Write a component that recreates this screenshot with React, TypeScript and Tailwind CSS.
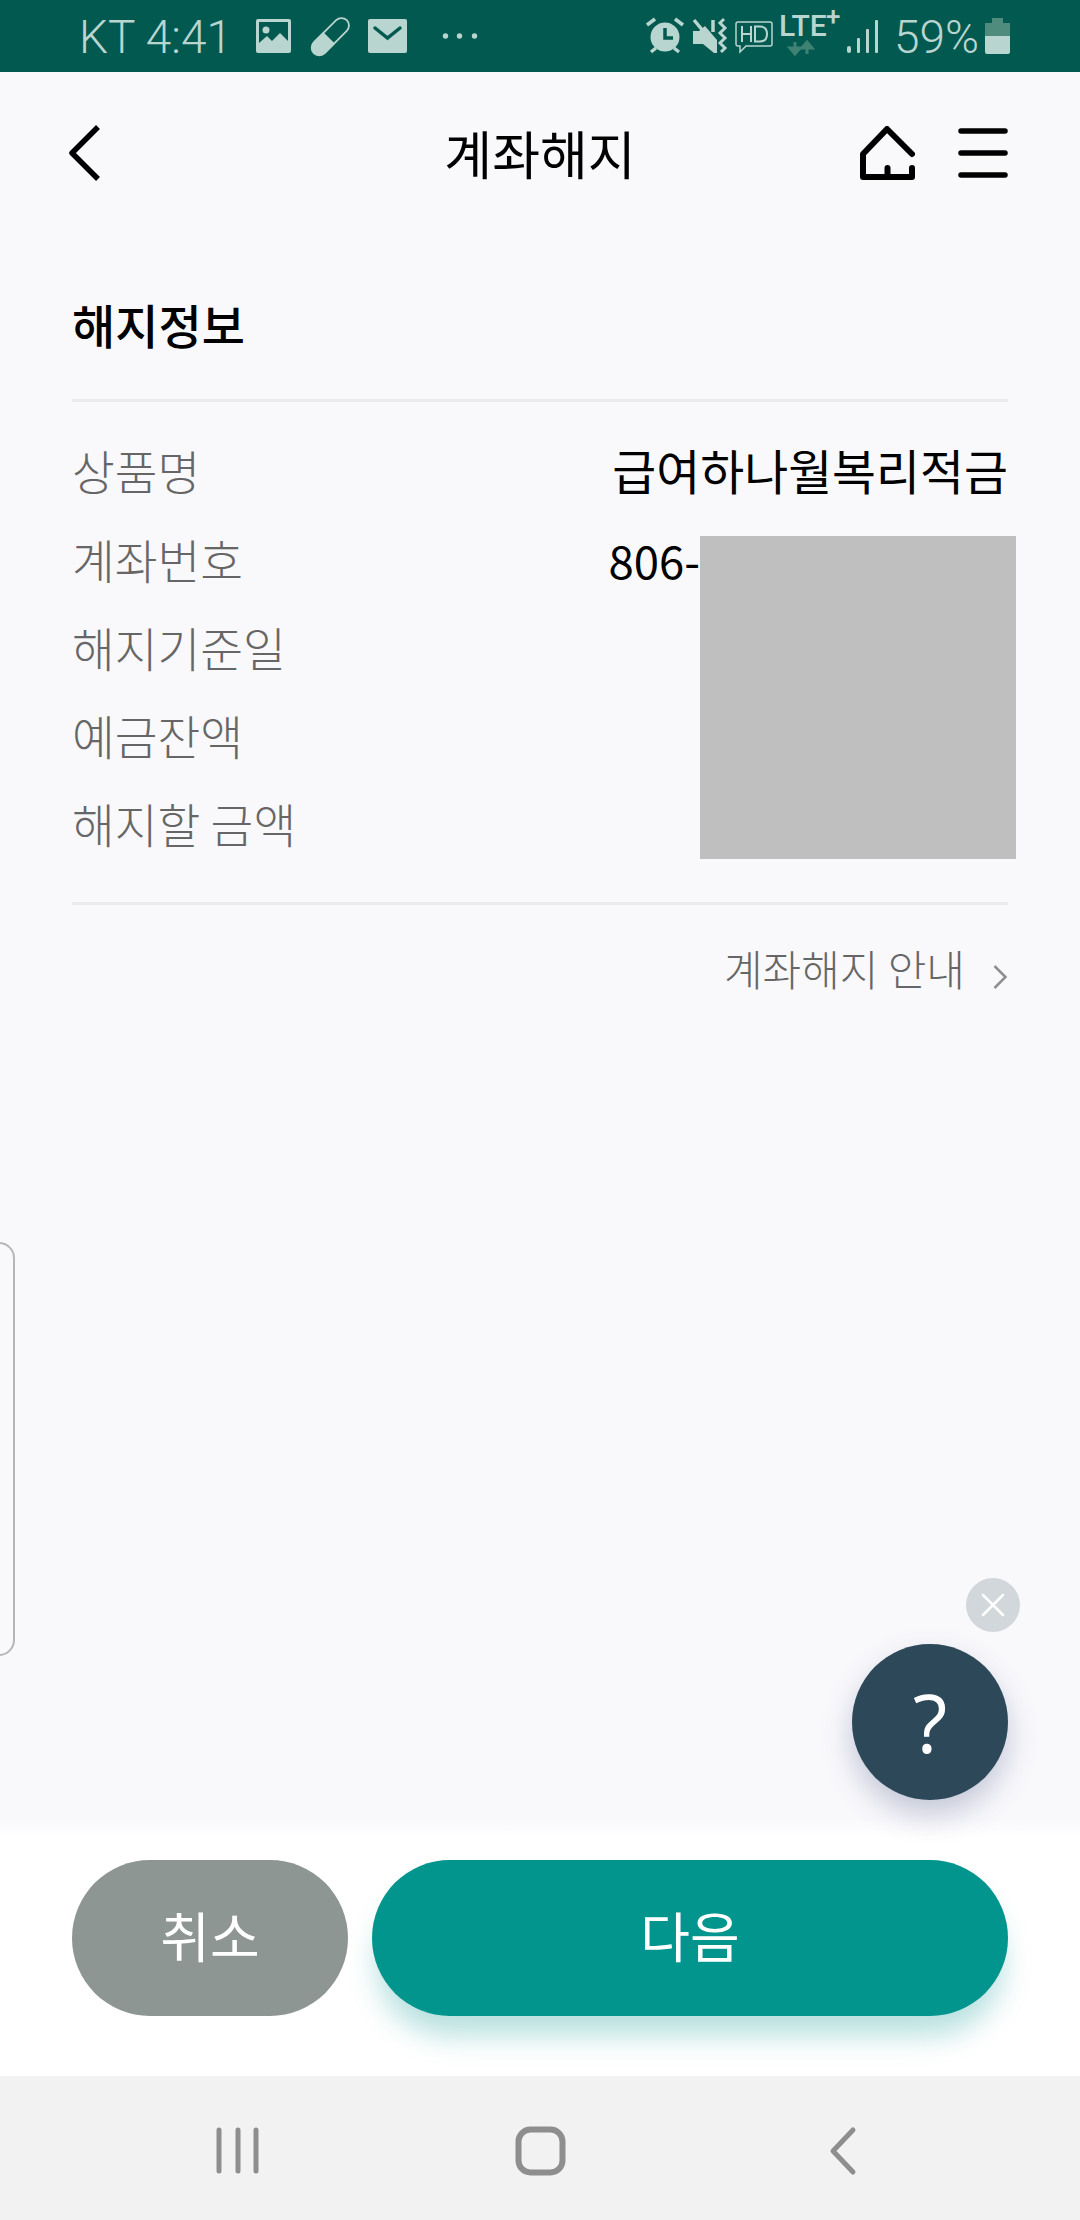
import React from 'react';

const rows = [
  { label: '상품명', value: '급여하나월복리적금', h: 'h-[90px]', valueClass: 'text-[47.800px]' },
  { label: '계좌번호', value: '806-', h: 'h-[88px]', valueClass: 'mr-[308px] text-[45.500px]' },
  { label: '해지기준일', value: '', h: 'h-[88px]', valueClass: '' },
  { label: '예금잔액', value: '', h: 'h-[88px]', valueClass: '' },
  { label: '해지할 금액', value: '', h: 'h-[88px]', valueClass: '' },
];

const StatusIcons = () => (
  <svg width="1080" height="72" viewBox="0 0 1080 72" className="absolute left-0 top-0" fill="#b9d5cf">
    {/* image */}
    <path fillRule="evenodd" d="M258 19h31a2 2 0 0 1 2 2v30a2 2 0 0 1-2 2h-31a2 2 0 0 1-2-2V21a2 2 0 0 1 2-2zm1 3v21l8-7 5 5 8-8 8 8V22z" />
    <circle cx="266" cy="30" r="3.500" />
    {/* pill */}
    <g transform="translate(330.500 36.500) rotate(-45)">
      <rect x="-23" y="-7.500" width="46" height="15" rx="7.500" fill="none" stroke="#b9d5cf" strokeWidth="1.800" />
      <path d="M-2 -8.400H-16a8.400 8.400 0 0 0 0 16.800H-2z" />
    </g>
    {/* mail */}
    <path d="M370 19h35a2 2 0 0 1 2 2v30a2 2 0 0 1-2 2h-35a2 2 0 0 1-2-2V21a2 2 0 0 1 2-2z" />
    <path d="M375 28l12.500 10L400 28" fill="none" stroke="#02594f" strokeWidth="3.500" strokeLinecap="round" />
    {/* dots */}
    <circle cx="445.500" cy="36" r="2.700" />
    <circle cx="459.500" cy="36" r="2.700" />
    <circle cx="474.500" cy="36" r="2.700" />
    {/* alarm */}
    <circle cx="665" cy="37" r="14.500" />
    <path d="M665 28v10h8" fill="none" stroke="#02594f" strokeWidth="3.500" />
    <path d="M647 25l8-6M683 25l-8-6M651 52l5-4M679 52l-5-4" fill="none" stroke="#b9d5cf" strokeWidth="3.500" />
    {/* mute + vibrate */}
    <path d="M693 31h6l6-5 12 14v13l-3 0-11-9h-10z" />
    <path d="M694 20l20 24" fill="none" stroke="#b9d5cf" strokeWidth="3.500" />
    <path d="M713 20v12" fill="none" stroke="#b9d5cf" strokeWidth="3.500" />
    <path d="M724 19l-4 4 5 5-5 5 5 5-5 5 5 5-4 4" fill="none" stroke="#b9d5cf" strokeWidth="3" />
    {/* hd bubble */}
    <path d="M738 22h32a2 2 0 0 1 2 2v20a2 2 0 0 1-2 2h-24l-6 6v-6h-2a2 2 0 0 1-2-2V24a2 2 0 0 1 2-2z" fill="none" stroke="#b9d5cf" strokeWidth="1.500" />
    <path d="M742 26v16M742 34h9M751 26v16M755 26.500v15h5q7 0 7-7.500t-7-7.500z" fill="none" stroke="#b9d5cf" strokeWidth="2" />
    {/* lte arrows */}
    <path d="M795 42v8M790 48l5 6 5-6z" stroke="#3f8274" strokeWidth="3" fill="#3f8274" />
    <path d="M807 54v-8M802 48l5-6 5 6z" stroke="#3f8274" strokeWidth="3" fill="#3f8274" />
    {/* signal */}
    <rect x="847" y="46" width="4" height="7" rx="2" />
    <rect x="857" y="38" width="3" height="15" rx="1" />
    <rect x="866" y="29" width="3" height="24" rx="1" />
    <rect x="875" y="20" width="3" height="33" rx="1" />
    {/* battery */}
    <path d="M992 18h11v5h7v13h-25V23h7z" fill="#4f8c7e" />
    <path d="M985 36h25v16a2 2 0 0 1-2 2h-21a2 2 0 0 1-2-2z" />
  </svg>
);

const App = () => {
  return (
    <div className="relative w-[1080px] h-[2220px] flex flex-col overflow-hidden bg-[#f9f9fc] font-['Noto_Sans_CJK_KR',sans-serif]">
      {/* status bar */}
      <div className="relative h-[72px] shrink-0 bg-[#02594f] font-['Roboto',sans-serif] text-[#b9d5cf]">
        <StatusIcons />
        <span className="absolute left-[79px] top-[11px] text-[46px] leading-[52px] font-light whitespace-nowrap">KT 4:41</span>
        <span className="absolute left-[779px] top-[9px] text-[30px] leading-[34px] font-medium whitespace-nowrap">LTE</span>
        <span className="absolute left-[826px] top-[4px] text-[26px] leading-[24px] font-medium">+</span>
        <span className="absolute left-[894px] top-[11px] text-[46px] leading-[52px] font-light whitespace-nowrap">59%</span>
      </div>

      {/* header */}
      <div className="relative h-[162px] shrink-0 flex items-center justify-between pl-[69px] pr-[72px]">
        <svg width="32" height="58" viewBox="0 0 32 58">
          <path d="M29 3L3 29l26 26" fill="none" stroke="#000" strokeWidth="5.500" strokeLinejoin="round" />
        </svg>
        <h1 className="absolute left-0 right-0 text-center text-[52px] leading-[60px] font-normal text-black">계좌해지</h1>
        <div className="flex items-center gap-[43px]">
          <svg width="55" height="54" viewBox="0 0 55 54">
            <path d="M52 28L27 3 3 28v23h49v-9M27.500 51v-9" fill="none" stroke="#000" strokeWidth="6" strokeLinecap="round" strokeLinejoin="round" />
          </svg>
          <svg width="50" height="50" viewBox="0 0 50 50">
            <path d="M3 3h44M3 25h44M3 47h44" fill="none" stroke="#000" strokeWidth="5.500" strokeLinecap="round" />
          </svg>
        </div>
      </div>

      {/* content */}
      <div className="flex-1 px-[72px]">
        <h2 className="h-[168px] pt-[60px] text-[47px] leading-[60px] font-medium text-black border-b-[3px] border-[#ebecf0]">해지정보</h2>
        <div className="pt-[23px] pb-[35px] border-b-[3px] border-[#ebecf0]">
          {rows.map((row) => (
            <div key={row.label} className={`${row.h} flex items-center justify-between`}>
              <span className="text-[46.500px] leading-[60px] font-light text-[#666666]">{row.label}</span>
              <span className={`${row.valueClass} leading-[60px] font-normal text-black`}>{row.value}</span>
            </div>
          ))}
        </div>
        <div className="mt-[33px] flex items-center justify-end gap-[28px]">
          <span className="text-[42px] leading-[60px] font-light text-[#666666]">계좌해지 안내</span>
          <svg width="15" height="26" viewBox="0 0 15 26" className="mt-[18px]">
            <path d="M1.500 2l11 11-11 11" fill="none" stroke="#8f8f8f" strokeWidth="2.500" />
          </svg>
        </div>
      </div>

      {/* buttons */}
      <div className="h-[258px] shrink-0 flex gap-[24px] bg-gradient-to-b from-[#f9f9fc] to-white to-[8%] px-[72px] pt-[42px]">
        <button className="w-[276px] h-[156px] pb-[8px] rounded-full bg-[#8e9694] text-[54px] font-normal text-white">취소</button>
        <button className="flex-1 h-[156px] pb-[8px] rounded-full bg-[#01958e] text-[54px] font-normal text-white shadow-[0_24px_28px_-4px_rgba(1,149,142,0.28)]">다음</button>
      </div>

      {/* android nav */}
      <div className="relative h-[144px] shrink-0 bg-[#f2f2f2] flex items-center">
        <svg width="1080" height="144" viewBox="0 0 1080 144" fill="none" stroke="#8e8e8e" strokeLinecap="round">
          <path d="M219 54v41M238 54v41M256 54v41" strokeWidth="5" />
          <rect x="518.500" y="53.500" width="44" height="43" rx="12" strokeWidth="6" />
          <path d="M853 54l-20 21 20 21" strokeWidth="5" strokeLinejoin="round" />
        </svg>
      </div>

      {/* redaction over the values */}
      <div className="absolute left-[700px] top-[536px] w-[316px] h-[323px] bg-[#bfbfbf]" />

      {/* side drawer handle */}
      <div className="absolute left-[-20px] top-[1242px] w-[35px] h-[414px] rounded-r-[16px] border-2 border-[#b4b6b8] bg-[#f9f9fc]" />

      {/* help bubble */}
      <div className="absolute left-[966px] top-[1578px] w-[54px] h-[54px] rounded-full bg-[#d2d7db] flex items-center justify-center">
        <svg width="24" height="24" viewBox="0 0 24 24">
          <path d="M2 2l20 20M22 2L2 22" stroke="#fff" strokeWidth="2.500" strokeLinecap="round" />
        </svg>
      </div>
      <div className="absolute left-[852px] top-[1644px] w-[156px] h-[156px] rounded-full bg-[#2d4858] shadow-[0_14px_30px_rgba(70,80,130,0.3)] flex items-center justify-center font-['Open_Sans',sans-serif] font-medium text-[80px] leading-none text-white">?</div>
    </div>
  );
};

export default App;
